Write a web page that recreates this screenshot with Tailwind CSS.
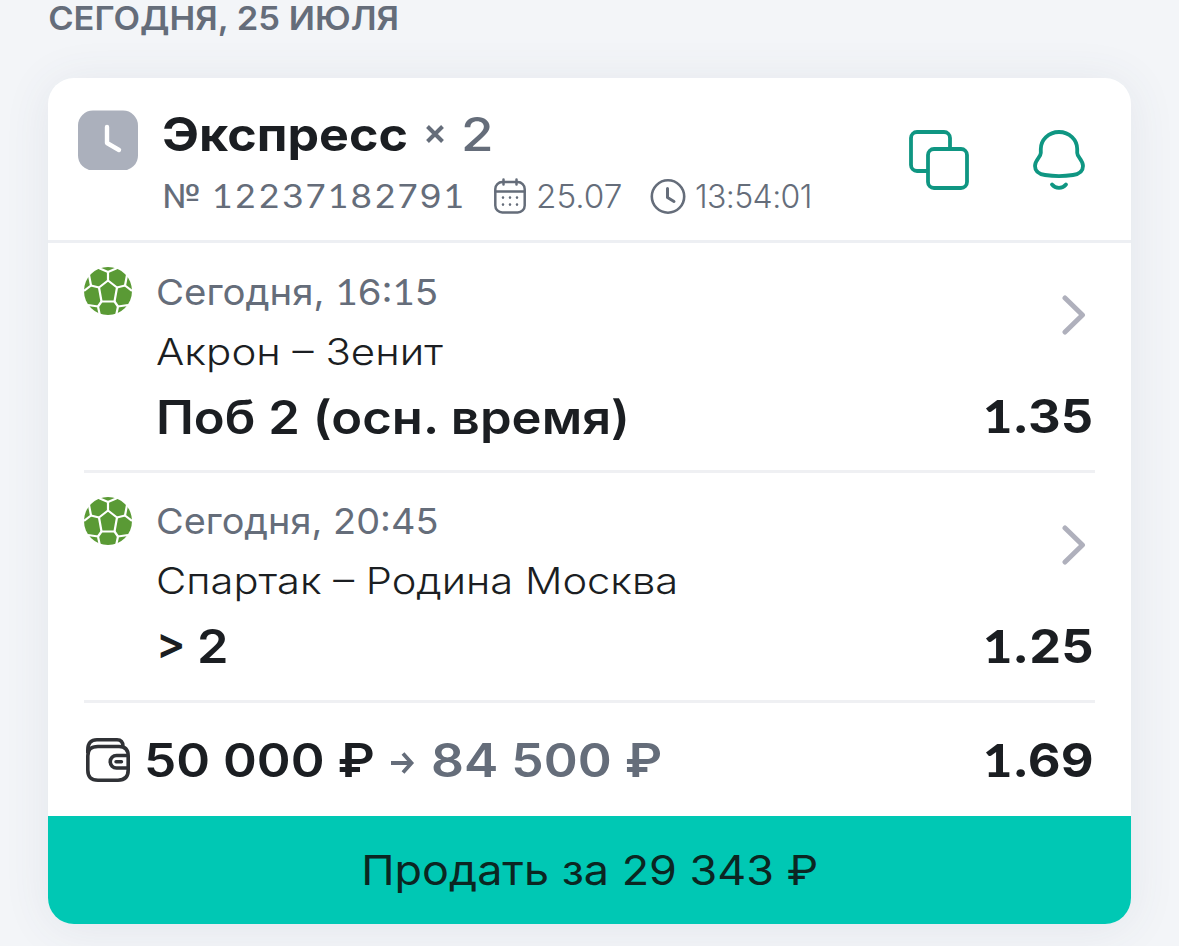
<!DOCTYPE html>
<html lang="ru">
<head>
<meta charset="utf-8">
<title>Экспресс</title>
<script src="https://cdn.jsdelivr.net/npm/@tailwindcss/browser@4"></script>
</head>
<body class="h-[946px] overflow-hidden bg-[#f3f5f8] font-[Inter,'Noto_Sans',sans-serif] text-[#1b1e22]">
<svg class="hidden">
  <symbol id="ball" viewBox="0 0 48 48">
    <circle cx="24" cy="24" r="24" fill="#5a9a35"/>
    <g fill="none" stroke="#fff" stroke-width="2.2" stroke-linejoin="round">
      <path d="M24 13.5 33 20.5 30.500 34.500H17.500L15 20.500Z"/>
      <path d="M24 13.500V5M33 20.500 41 18.500M30.500 34.500 34 39.500M17.500 34.500 14 39.500M15 20.500 7 18.500"/>
      <path d="M13 0 17 2 24 5 31 2 35 0M5 8 7 18.500 0 24M43 8 41 18.500 48 24M4 38 14 39.500 16 49M44 38 34 39.500 32 49"/>
    </g>
  </symbol>
  <symbol id="chevron" viewBox="0 0 24 40">
    <path d="M3 3 20.5 20 3 37" fill="none" stroke="#afb0bc" stroke-width="5" stroke-linecap="round" stroke-linejoin="round"/>
  </symbol>
</svg>

<h2 class="h-[78px] w-[400px] origin-left scale-x-[1.047] pl-[46px] text-[33px] leading-[37px] font-semibold whitespace-nowrap text-[#656d7a]">СЕГОДНЯ, 25 ИЮЛЯ</h2>

<main class="mx-12 w-[1083px] overflow-hidden rounded-[26px] bg-white shadow-[0_4px_48px_rgba(70,80,110,0.09)]">
  <header class="flex h-[165px] border-b-[3px] border-[#edeff3] pl-[30px]">
    <svg class="mt-8 size-[60px] shrink-0" viewBox="0 0 60 60" fill="none">
      <rect y="0.500" width="60" height="60" rx="15" fill="#abb0bc"/>
      <path d="M29 17V33L41 40" stroke="#fff" stroke-width="4.4" stroke-linecap="round" stroke-linejoin="round"/>
    </svg>
    <div class="ml-6 w-[747px] pt-7 text-[#656d7a]">
      <div class="flex h-14 text-[46px] leading-14">
        <h1 class="w-[263px] font-bold text-[#1b1e22]"><span class="inline-block origin-left scale-x-[1.09]">Экспресс</span></h1>
        <svg class="mt-[18px] size-5" viewBox="0 0 20 20"><path d="M2.5 2.5 17.5 17.5M17.5 2.5 2.5 17.5" stroke="#656d7a" stroke-width="4"/></svg>
        <span class="ml-4 inline-block origin-left scale-x-[1.15] font-medium">2</span>
      </div>
      <div class="mt-4 flex h-9 text-[32px] leading-9">
        <span class="w-[332px] whitespace-nowrap"><span class="inline-block w-[50px]"><span class="inline-block origin-left scale-x-[1.13]">№</span></span><span class="inline-block origin-left scale-x-[1.11] tracking-[1.75px]"><span class="font-[Lato]">1</span>2237<span class="font-[Lato]">1</span>8279<span class="font-[Lato]">1</span></span></span>
        <svg class="h-9 w-8 shrink-0" viewBox="0 0 32 36" fill="none" stroke="#656d7a" stroke-width="2.5" stroke-linecap="round">
          <rect x="1.3" y="4" width="29.4" height="30.500" rx="7"/>
          <path d="M9.500 1.500V6.500M22.500 1.500V6.500M1.500 13.500H30.500"/>
          <path d="M9 19.500V19.600M16 19.500V19.600M23 19.500V19.600M9 26.500V26.600M16 26.500V26.600M23 26.500V26.600" stroke-width="2.600"/>
        </svg>
        <span class="ml-2.5 w-[114px] pt-px font-light"><span class="inline-block origin-left scale-x-[1.04]">25.07</span></span>
        <svg class="size-9 shrink-0" viewBox="0 0 36 36" fill="none" stroke="#656d7a" stroke-width="2.6" stroke-linecap="round" stroke-linejoin="round">
          <circle cx="18" cy="18.500" r="16.200"/><path d="M17.500 10.500V19.500L24 23.500" stroke-width="3"/>
        </svg>
        <span class="ml-[9px] pt-px whitespace-nowrap font-light tracking-[-0.6px]">13:54:01</span>
      </div>
    </div>
    <svg class="mt-[52px] size-[60px] shrink-0" viewBox="0 0 60 60" fill="none" stroke="#0f9682" stroke-width="3.8">
      <path d="M18 41H8a6 6 0 0 1-6-6V8a6 6 0 0 1 6-6H35a6 6 0 0 1 6 6V18"/>
      <rect x="19" y="19" width="39" height="39" rx="6"/>
    </svg>
    <svg class="mt-[52px] ml-16 h-[60px] w-[52px] shrink-0" viewBox="0 0 52 60" fill="none" stroke="#0f9682" stroke-width="3.8" stroke-linecap="round" stroke-linejoin="round">
      <path d="M26 2C15.5 2 7.8 9.8 7.8 19V23C7.8 27 2 30 2 36C2 41 5.500 44 12 45C20 46.300 32 46.300 40 45C46.500 44 50 41 50 36C50 30 44.200 27 44.200 23V19C44.200 9.800 36.500 2 26 2Z"/>
      <path d="M19 54.500C22.500 58.900 29.500 58.900 33 54.500"/>
    </svg>
  </header>

  <div class="px-9">
    <section class="flex h-[230px] border-b-[3px] border-[#eff0f3] pt-6">
      <svg class="size-12 shrink-0"><use href="#ball"/></svg>
      <div class="ml-6 w-[600px] whitespace-nowrap">
        <p class="origin-left scale-x-[1.066] text-[36px] leading-12 text-[#656d7a]">Сегодня, <span class="font-[Lato]">1</span>6:<span class="font-[Lato]">1</span>5</p>
        <p class="mt-1.5 origin-left scale-x-[1.135] text-[37px] leading-[60px] font-light">Акрон – Зенит</p>
        <p class="mt-[7px] origin-left scale-x-[1.104] text-[46px] leading-14 font-semibold">Поб 2 (осн. время)</p>
      </div>
      <div class="ml-auto flex w-[112px] flex-col">
        <svg class="mt-7 ml-[79px] h-10 w-6"><use href="#chevron"/></svg>
        <p class="mt-[53px] origin-left scale-x-[1.1] text-[46px] leading-14 font-bold"><span class="font-[Lato] font-black">1</span>.35</p>
      </div>
    </section>

    <section class="flex h-[230px] border-b-[3px] border-[#eff0f3] pt-6">
      <svg class="size-12 shrink-0"><use href="#ball"/></svg>
      <div class="ml-6 w-[600px] whitespace-nowrap">
        <p class="origin-left scale-x-[1.052] text-[36px] leading-12 text-[#656d7a]">Сегодня, 20:45</p>
        <p class="mt-1.5 origin-left scale-x-[1.125] text-[37px] leading-[60px] font-light">Спартак – Родина Москва</p>
        <p class="mt-[7px] flex text-[46px] leading-14 font-semibold"><span class="w-[41px] text-[44px] leading-[50px]">&gt;</span><span class="inline-block origin-left scale-x-[1.1]">2</span></p>
      </div>
      <div class="ml-auto flex w-[112px] flex-col">
        <svg class="mt-7 ml-[79px] h-10 w-6"><use href="#chevron"/></svg>
        <p class="mt-[53px] origin-left scale-x-[1.1] text-[46px] leading-14 font-bold"><span class="font-[Lato] font-black">1</span>.25</p>
      </div>
    </section>

    <section class="flex h-[113px] pt-[29px] text-[46px] leading-14 font-semibold whitespace-nowrap">
      <svg class="mt-1.5 ml-0.5 h-11 w-11 shrink-0" viewBox="0 0 44 44" fill="none" stroke="#303236" stroke-width="3.6" stroke-linejoin="round">
        <path d="M1.800 15V12C1.800 5 5 1.800 11 1.800H31C35 1.800 37 4 37 8.500"/>
        <path d="M1.800 18C1.800 11 5 8.500 12 8.500H33C39 8.500 42.200 12 42.200 18V32C42.200 39 39 42.200 32 42.200H12C5 42.200 1.800 39 1.800 32Z"/>
        <path d="M42 17.500H30.500A6 6 0 0 0 30.500 30H42"/>
        <path d="M30 23.700H35.500" stroke-width="3.400" stroke-linecap="round"/>
      </svg>
      <span class="ml-3.5 w-[247px]"><span class="inline-block origin-left scale-x-[1.115]">50 000 ₽</span></span>
      <svg class="mt-[19px] h-6 w-6 shrink-0" viewBox="0 0 24 24" fill="none" stroke="#656d7a" stroke-width="3.800"><path d="M0 12H20M12 2.500 20.500 12 12 21.500"/></svg>
      <span class="ml-4 w-[240px] text-[#656d7a]"><span class="inline-block origin-left scale-x-[1.12]">84 500 ₽</span></span>
      <p class="ml-auto w-[112px] origin-left scale-x-[1.1] font-bold"><span class="font-[Lato] font-black">1</span>.69</p>
    </section>
  </div>

  <button class="block h-[108px] w-full bg-[#00c8b4] text-[41px] leading-[108px] whitespace-nowrap text-[#0b2622]"><span class="inline-block scale-x-[1.095]">Продать за 29 343 ₽</span></button>
</main>
</body>
</html>
